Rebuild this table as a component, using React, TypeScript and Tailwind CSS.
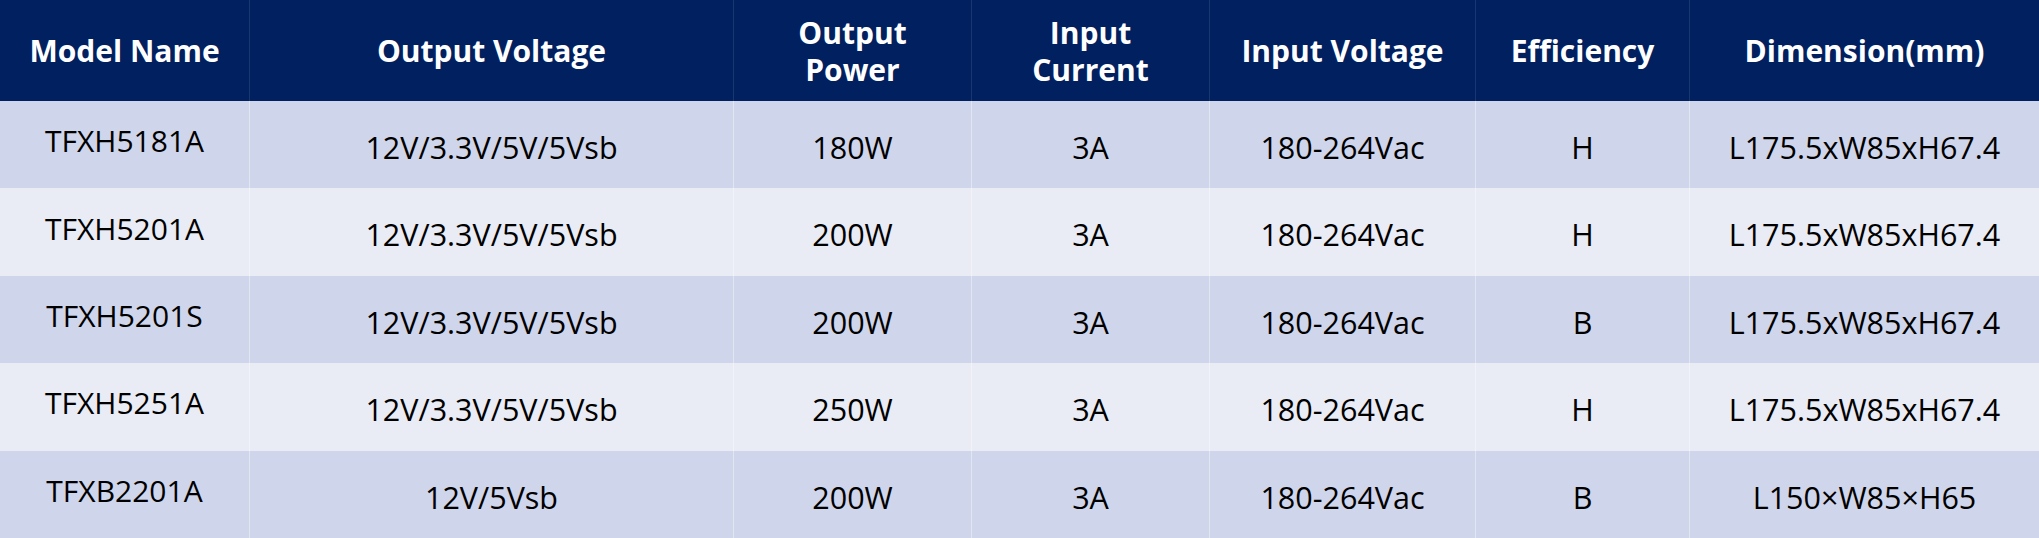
const headers: string[][] = [
  ['Model Name'],
  ['Output Voltage'],
  ['Output', 'Power'],
  ['Input', 'Current'],
  ['Input Voltage'],
  ['Efficiency'],
  ['Dimension(mm)'],
]

const rows: string[][] = [
  ['TFXH5181A', '12V/3.3V/5V/5Vsb', '180W', '3A', '180-264Vac', 'H', 'L175.5xW85xH67.4'],
  ['TFXH5201A', '12V/3.3V/5V/5Vsb', '200W', '3A', '180-264Vac', 'H', 'L175.5xW85xH67.4'],
  ['TFXH5201S', '12V/3.3V/5V/5Vsb', '200W', '3A', '180-264Vac', 'B', 'L175.5xW85xH67.4'],
  ['TFXH5251A', '12V/3.3V/5V/5Vsb', '250W', '3A', '180-264Vac', 'H', 'L175.5xW85xH67.4'],
  ['TFXB2201A', '12V/5Vsb', '200W', '3A', '180-264Vac', 'B', 'L150×W85×H65'],
]

const cols = 'grid grid-cols-[249px_484px_238px_238px_266px_214px_350px]'

export default function App() {
  return (
    <div
      className="flex h-[538px] w-[2039px] flex-col bg-white"
      style={{ fontFamily: '"Open Sans", "Noto Sans", sans-serif' }}
    >
      <div className={`${cols} h-[101px] shrink-0 bg-[#002060]`}>
        {headers.map((lines, i) => (
          <div
            key={i}
            className={`flex flex-col items-center justify-center text-[30px] font-bold leading-[37px] text-white ${
              i > 0 ? 'border-l border-white/10' : ''
            }`}
          >
            {lines.map((l) => (
              <span key={l}>{l}</span>
            ))}
          </div>
        ))}
      </div>
      {rows.map((row, r) => (
        <div
          key={r}
          className={`${cols} flex-1 ${r % 2 === 0 ? 'bg-[#cfd5ea]' : 'bg-[#e9ebf5]'}`}
        >
          {row.map((cell, i) => (
            <div
              key={i}
              className={`flex items-center justify-center leading-none text-black ${
                i > 0 ? 'border-l border-white/40 pt-[5px] text-[30.5px]' : 'pb-[7px] text-[30px]'
              }`}
            >
              {cell}
            </div>
          ))}
        </div>
      ))}
    </div>
  )
}
